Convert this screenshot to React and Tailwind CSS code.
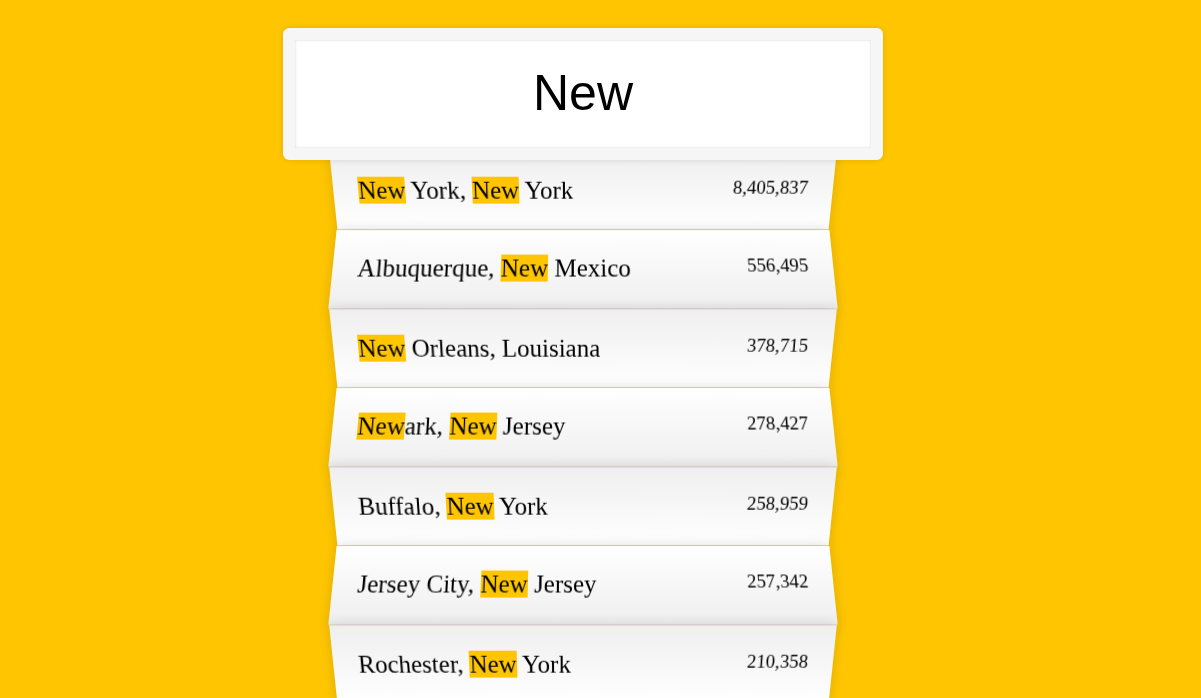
import React from "react";

const cities = [
  { name: "New York, New York", pop: "8,405,837" },
  { name: "Albuquerque, New Mexico", pop: "556,495" },
  { name: "New Orleans, Louisiana", pop: "378,715" },
  { name: "Newark, New Jersey", pop: "278,427" },
  { name: "Buffalo, New York", pop: "258,959" },
  { name: "Jersey City, New Jersey", pop: "257,342" },
  { name: "Rochester, New York", pop: "210,358" },
];

function Highlight({ text, term }) {
  const parts = text.split(new RegExp(`(${term})`, "gi"));
  return (
    <span>
      {parts.map((p, i) =>
        p.toLowerCase() === term.toLowerCase() ? (
          <span key={i} className="bg-[#ffc600]">
            {p}
          </span>
        ) : (
          <React.Fragment key={i}>{p}</React.Fragment>
        )
      )}
    </span>
  );
}

export default function App() {
  const term = "New";
  return (
    <div className="h-screen overflow-hidden bg-[#ffc600] font-['Liberation_Serif',serif] text-black">
      <form className="ml-[333px] mt-[15.5px] w-[500px]" onSubmit={(e) => e.preventDefault()}>
        <input
          type="text"
          defaultValue="New"
          readOnly
          className="relative left-[-10%] top-[12.5px] z-[2] m-0 block w-[120%] rounded-[6.25px] border-[12.5px] border-[#F6F6F6] bg-white p-[25px] text-center font-['Liberation_Sans',Arial,sans-serif] text-[50px] leading-[57.5px] text-black outline-0 shadow-[0_0_6.25px_rgba(0,0,0,0.12),inset_0_0_2.5px_rgba(0,0,0,0.19)]"
        />
        <ul className="relative m-0 mt-[1px] p-0">
          {cities.map((c, i) => (
            <li
              key={c.name}
              className={
                "m-0 flex list-none justify-between border-b-[1.25px] border-[#D8D8D8] p-[25px] text-[25px] leading-[normal] capitalize shadow-[0_0_12.5px_rgba(0,0,0,0.14)] " +
                (i % 2 === 0
                  ? "bg-[linear-gradient(to_top,#ffffff_0%,#EFEFEF_100%)] [transform:perspective(125px)_rotateX(-3deg)_translateY(3.75px)]"
                  : "bg-[linear-gradient(to_bottom,#ffffff_0%,#EFEFEF_100%)] [transform:perspective(125px)_rotateX(3deg)_translateY(2.5px)_scale(1.001)]")
              }
            >
              <Highlight text={c.name} term={term} />
              <span className="text-[18.75px]">{c.pop}</span>
            </li>
          ))}
        </ul>
      </form>
    </div>
  );
}
